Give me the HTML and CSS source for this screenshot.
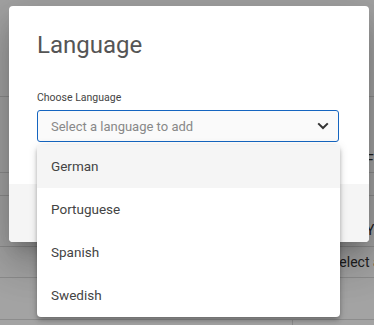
FILE: index.html
```html
<!DOCTYPE html>
<html lang="en">

<head>
    <meta charset="UTF-8">
    <meta name="viewport" content="width=device-width, initial-scale=1.0">
    <link rel="stylesheet" href="styles.css">
    <title>Language</title>
</head>

<body>
    <div class="page">
        <div class="row r1"></div>
        <div class="row r2"><span class="cell">Fir</span></div>
        <div class="row r3"></div>
        <div class="row r4"><span class="cell">Year</span></div>
        <div class="row r5"><span class="cell">Select a</span></div>
        <div class="row r6"></div>
        <div class="row r7"><span class="split"></span></div>
    </div>

    <div class="scrim"></div>

    <div class="dialog">
        <div class="dialog-body">
            <h2 class="title">Language</h2>
            <div class="field">
                <label class="label">Choose Language</label>
                <div class="select">
                    <span class="placeholder">Select a language to add</span>
                    <svg class="chevron" width="12" height="8" viewBox="0 0 12 8">
                        <path d="M1.2 1.4 L6 6 L10.8 1.4" fill="none" stroke="#333" stroke-width="2" />
                    </svg>
                </div>
                <ul class="menu">
                    <li class="active">German</li>
                    <li>Portuguese</li>
                    <li>Spanish</li>
                    <li>Swedish</li>
                </ul>
            </div>
        </div>
        <div class="dialog-footer"></div>
    </div>
</body>

</html>
```
FILE: styles.css
```css
* {
    margin: 0;
    padding: 0;
    box-sizing: border-box;
}

ul,
li {
    list-style: none;
}

body {
    width: 374px;
    height: 325px;
    overflow: hidden;
    position: relative;
    background-color: #fff;
    font-family: Roboto, "Liberation Sans", sans-serif;
}

/* page behind the dialog */
.page {
    display: flex;
    flex-direction: column;
}

.row {
    border-bottom: 1px solid #dcdcdc;
    display: flex;
    align-items: center;
    padding-left: 366px;
    font-size: 14px;
    color: #333;
    white-space: nowrap;
}

.r1 {
    height: 97px;
}

.r2 {
    height: 76px;
    align-items: flex-end;
    padding-bottom: 4px;
}

.r3 {
    height: 23px;
}

.r4 {
    height: 51px;
    align-items: flex-end;
    padding-bottom: 8px;
}

.r5 {
    height: 31px;
    padding-left: 331px;
}

.r6 {
    height: 42px;
}

.r7 {
    height: 20px;
    border-bottom: none;
    padding-left: 292px;
}

.split {
    width: 1px;
    height: 100%;
    background-color: #dcdcdc;
}

.scrim {
    position: absolute;
    inset: 0;
    background-color: rgba(0, 0, 0, 0.36);
}

/* dialog */
.dialog {
    position: absolute;
    left: 9px;
    top: 6px;
    width: 360px;
    height: 236px;
    background-color: #fff;
    border-radius: 4px;
    display: flex;
    flex-direction: column;
    box-shadow: 0 11px 15px -7px rgba(0, 0, 0, 0.2), 0 24px 38px 3px rgba(0, 0, 0, 0.14), 0 9px 46px 8px rgba(0, 0, 0, 0.12);
}

.dialog-body {
    height: 178px;
    padding: 23px 28px 0;
}

.dialog-footer {
    flex: 1;
    background-color: #f5f5f5;
    border-radius: 0 0 4px 4px;
}

.title {
    font-size: 24px;
    line-height: 32px;
    font-weight: 400;
    color: #555;
}

.field {
    position: relative;
    margin-top: 30px;
}

.label {
    display: block;
    font-size: 10.5px;
    line-height: 14px;
    color: #444;
}

.select {
    margin-top: 5px;
    width: 302px;
    height: 32px;
    border: 1px solid #1565c0;
    border-radius: 3px;
    background-color: #fafafa;
    display: flex;
    align-items: center;
    justify-content: space-between;
    padding: 0 9px 0 13px;
}

.placeholder {
    font-size: 13px;
    color: #888;
}

.menu {
    position: absolute;
    top: 54px;
    left: 0;
    width: 303px;
    background-color: #fff;
    border-radius: 4px;
    overflow: hidden;
    box-shadow: 0 2px 4px -1px rgba(0, 0, 0, 0.2), 0 4px 5px rgba(0, 0, 0, 0.14), 0 1px 10px rgba(0, 0, 0, 0.12);
}

.menu li {
    height: 43px;
    display: flex;
    align-items: center;
    padding: 0 0 2px 14px;
    font-size: 13.5px;
    color: #444;
}

.menu .active {
    background-color: #f5f5f5;
}
```
